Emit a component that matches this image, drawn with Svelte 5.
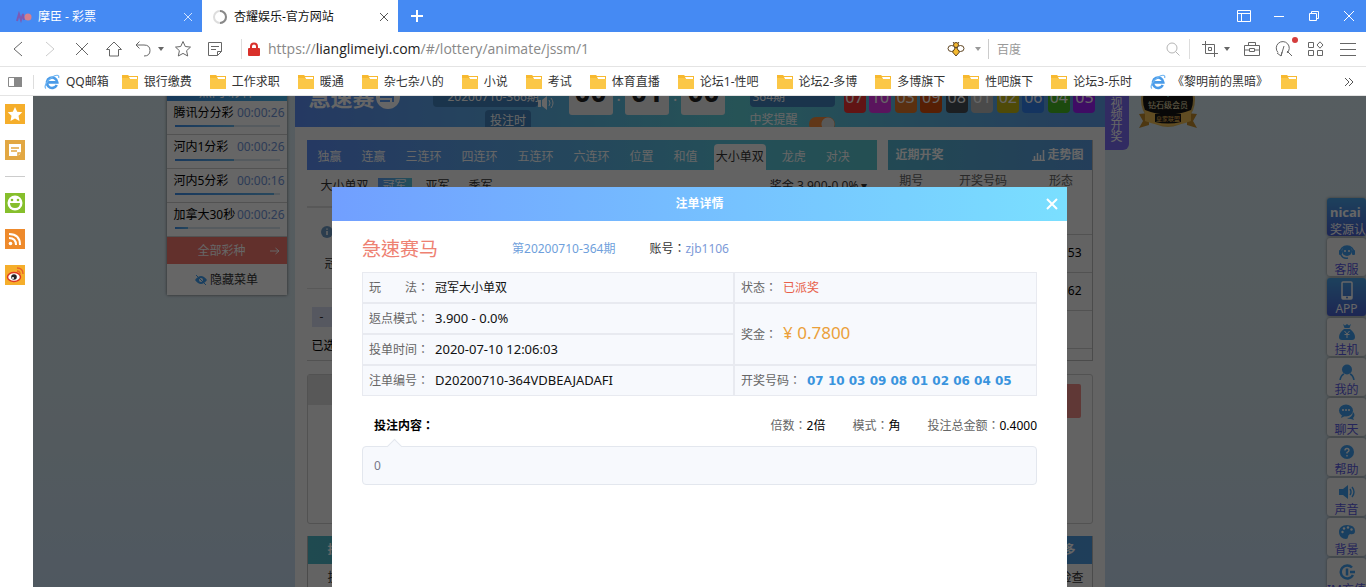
<script lang="ts">
  type Bookmark = { name: string; ie?: boolean }

  const bookmarks: Bookmark[] = [
    { name: 'QQ邮箱', ie: true },
    { name: '银行缴费' },
    { name: '工作求职' },
    { name: '暖通' },
    { name: '杂七杂八的' },
    { name: '小说' },
    { name: '考试' },
    { name: '体育直播' },
    { name: '论坛1-性吧' },
    { name: '论坛2-多博' },
    { name: '多博旗下' },
    { name: '性吧旗下' },
    { name: '论坛3-乐时' },
    { name: '《黎明前的黑暗》', ie: true },
    { name: '' },
  ]

  const lotteries = [
    { name: '腾讯分分彩', time: '00:00:26', pct: 57 },
    { name: '河内1分彩', time: '00:00:26', pct: 57 },
    { name: '河内5分彩', time: '00:00:16', pct: 95 },
    { name: '加拿大30秒', time: '00:00:26', pct: 13 },
  ]

  const balls = [
    { n: '07', color: '#f23232' },
    { n: '10', color: '#e134e8' },
    { n: '03', color: '#e37828' },
    { n: '09', color: '#d74e0c' },
    { n: '08', color: '#464e55' },
    { n: '01', color: '#b9b9b9' },
    { n: '02', color: '#c6b914' },
    { n: '06', color: '#3282f0' },
    { n: '04', color: '#46b923' },
    { n: '05', color: '#9e1efa' },
  ]

  const tabs = ['独赢', '连赢', '三连环', '四连环', '五连环', '六连环', '位置', '和值', '大小单双', '龙虎', '对决']
  let activeTab = $state('大小单双')

  // winning-shape column of the recent draws
  const shapes = ['', '53', '162', '', '04']

  const dock = ['客服', 'APP', '挂机', '我的', '聊天', '帮助', '声音', '背景', 'IM充值']

  const bet = {
    play: '冠军大小单双',
    mode: '3.900 - 0.0%',
    time: '2020-07-10 12:06:03',
    id: 'D20200710-364VDBEAJADAFI',
    status: '已派奖',
    prize: '0.7800',
    numbers: '07 10 03 09 08 01 02 06 04 05',
  }
</script>

{#snippet ieIcon()}
  <svg width="16" height="16" viewBox="0 0 16 16" fill="none">
    <path d="M12.8 11a5.2 5.2 0 1 1 .5-2.6H4" stroke="#4a9be8" stroke-width="2.6" />
    <path d="M2 14.6C-.6 12.800 3 6.500 8 3.200 12.500.2 15.600.8 14.600 4" stroke="#6db4f2" stroke-width="1.200" />
  </svg>
{/snippet}

{#snippet folderIcon()}
  <svg width="16" height="14" viewBox="0 0 16 14">
    <path d="M0 0h6l1 1h9v13H0z" fill="#f7b930" />
    <path d="M7 2h8v2H8z" fill="#fff" />
    <path d="M0 3h6l2 1h8v10H0z" fill="#fbc747" />
  </svg>
{/snippet}

{#snippet dockIcon(name: string)}
  <svg width={name === 'APP' ? 16 : 18} height={name === 'APP' ? 20 : 16} viewBox={name === 'APP' ? '0 0 16 20' : '0 0 18 16'} fill="#3f9ff0">
    {#if name === '客服'}
      <circle cx="9" cy="7" r="5" />
      <path d="M2 9a7 7 0 0 1 14 0M3 11q2 4 7 3" fill="none" stroke="#3f9ff0" stroke-width="1.500" />
      <rect x="1" y="6" width="3" height="5" rx="1" /><rect x="14" y="6" width="3" height="5" rx="1" />
      <circle cx="7" cy="7" r="1" fill="#fff" /><circle cx="11" cy="7" r="1" fill="#fff" />
    {:else if name === 'APP'}
      <rect x="3" y="1" width="10" height="17" rx="1" fill="none" stroke="#fff" stroke-width="1.500" />
      <path d="M3 15h10v3H3z" fill="#fff" /><circle cx="8" cy="16.500" r="1" fill="#4a80d8" />
    {:else if name === '挂机'}
      <path d="M5 0l2 1.500L9 0l2 1.500L13 0l-1.500 4h-5zM6 5h6q5 4 5 8 0 3-3 3H4q-3 0-3-3 0-4 5-8z" />
      <path d="M6.500 7L9 10l2.500-3M6.500 10.500h5M9 10v4" stroke="#fff" fill="none" />
    {:else if name === '我的'}
      <circle cx="9" cy="5.500" r="5" />
      <path d="M2 16q1-5 4-6M16 16q-1-5-4-6" fill="none" stroke="#3f9ff0" stroke-width="1.600" />
    {:else if name === '聊天'}
      <ellipse cx="8" cy="6.500" rx="7" ry="6" /><path d="M4 11l-1 3 4-2zM15 8q3 3 0 6l1 2-3-1q-3 0-4-1 5 0 6-6z" />
      <circle cx="5" cy="6" r="1" fill="#fff" /><circle cx="8" cy="6" r="1" fill="#fff" /><circle cx="11" cy="6" r="1" fill="#fff" />
    {:else if name === '帮助'}
      <circle cx="9" cy="8" r="7" />
      <path d="M7 6.500q0-2 2-2t2 1.800q0 1-2 2.200v1M9 11v1.500" fill="none" stroke="#fff" stroke-width="1.400" />
    {:else if name === '声音'}
      <path d="M1 5h4l5-4v14l-5-4H1z" />
      <path d="M12 5q2 3 0 6M14 3q4 5 0 10" fill="none" stroke="#3f9ff0" stroke-width="1.400" />
    {:else if name === '背景'}
      <path d="M9 1C4 1 1 4 1 8s3 7 7 7q2 0 2-2t2-3q5 1 5-3 0-6-8-6z" />
      <g fill="#fff"><circle cx="4.500" cy="8" r="1.200" /><circle cx="6" cy="4.500" r="1.200" /><circle cx="10" cy="3.500" r="1.200" /><circle cx="13.500" cy="5.500" r="1.200" /></g>
    {:else}
      <path d="M14 3.500A6.500 6.500 0 1 0 15 11" fill="none" stroke="#3f9ff0" stroke-width="2.500" />
      <path d="M9 4.500v7M12 8h5" stroke="#3f9ff0" stroke-width="2.500" />
    {/if}
  </svg>
{/snippet}

<div class="browser">
  <header class="titlebar">
    <div class="tab">
      <svg width="16" height="12" viewBox="0 0 16 12">
        <path d="M1 10l2-7 2 6 2-6 1 6" fill="none" stroke="#7c5ab4" stroke-width="2" />
        <circle cx="12" cy="6" r="3.500" fill="#d77f8c" />
      </svg>
      <span>摩臣 - 彩票</span>
      <button aria-label="关闭标签"><svg width="10" height="10" viewBox="0 0 10 10"><path d="M1 1l8 8M9 1L1 9" stroke="#cfe2ff" /></svg></button>
    </div>
    <div class="tab current">
      <svg width="16" height="16" viewBox="0 0 16 16" fill="none" stroke-width="2">
        <circle cx="8" cy="8" r="6" stroke="#ddd" /><path d="M8 2a6 6 0 0 1 0 12" stroke="#888" />
      </svg>
      <span>杏耀娱乐-官方网站</span>
      <button aria-label="关闭标签"><svg width="10" height="10" viewBox="0 0 10 10"><path d="M1 1l8 8M9 1L1 9" stroke="#555" /></svg></button>
    </div>
    <button class="new-tab" aria-label="新标签"><svg width="12" height="12" viewBox="0 0 12 12"><path d="M6 0v12M0 6h12" stroke="#fff" stroke-width="2" /></svg></button>
    <div class="window-buttons">
      <button aria-label="布局"><svg width="14" height="12" viewBox="0 0 14 12"><path d="M.5.5h13v11H.5zM.5 3.500h13M4.500 3.500v8" /></svg></button>
      <button aria-label="最小化"><svg width="12" height="12" viewBox="0 0 12 12"><path d="M1 6.500h10" /></svg></button>
      <button aria-label="还原"><svg width="12" height="12" viewBox="0 0 12 12"><path d="M1.500 3.500h7v7h-7zM3.500 3V1.500h7v7H9" /></svg></button>
      <button aria-label="关闭"><svg width="12" height="12" viewBox="0 0 12 12"><path d="M1 1l10 10M11 1L1 11" /></svg></button>
    </div>
  </header>

  <nav class="toolbar">
    <button aria-label="后退"><svg width="12" height="18" viewBox="0 0 12 18"><path d="M10 2L2 9l8 7" /></svg></button>
    <button class="off" aria-label="前进"><svg width="12" height="18" viewBox="0 0 12 18"><path d="M2 2l8 7-8 7" /></svg></button>
    <button aria-label="停止"><svg width="14" height="14" viewBox="0 0 14 14"><path d="M1 1l12 12M13 1L1 13" /></svg></button>
    <button aria-label="主页"><svg width="18" height="18" viewBox="0 0 18 18"><path d="M1.500 9.500L9 2l7.500 7.500h-3v6.500h-9V9.500z" /></svg></button>
    <button class="wide" aria-label="撤销">
      <svg width="18" height="18" viewBox="0 0 18 18"><path d="M5.500 1.500L2 5l3.500 3.500M2 5h8q6 0 6 5.500T10 16" /></svg>
      <i class="caret"></i>
    </button>
    <button aria-label="收藏"><svg width="18" height="18" viewBox="0 0 18 18"><path d="M9 1.500l2.300 5 5.200.6-3.900 3.600 1.100 5.300L9 13.400 4.300 16l1.100-5.300L1.500 7.100l5.200-.6z" /></svg></button>
    <button aria-label="笔记"><svg width="16" height="16" viewBox="0 0 16 16"><path d="M1.500 1.500h13v9l-4 4h-9zM14.500 10.500h-4v4M4 5.500h8M4 8.500h5" /></svg></button>
    <div class="address">
      <svg width="12" height="15" viewBox="0 0 12 15"><path d="M3 7V4.500a3 3 0 0 1 6 0V7" fill="none" stroke="#d9302a" stroke-width="2" /><rect y="6" width="12" height="8" rx="1" fill="#d9302a" /></svg>
      <div class="url" role="textbox" tabindex="0" aria-label="网址">https://<b>lianglimeiyi.com</b>/#/lottery/animate/jssm/1</div>
    </div>
    <div class="search">
      <svg width="18" height="16" viewBox="0 0 18 16" stroke="#5f4522">
        <path d="M6 1l2 2.500M12 1l-2 2.500" fill="none" /><circle cx="9" cy="4" r="2.500" fill="#f4b92f" />
        <ellipse cx="4.500" cy="7.500" rx="3.500" ry="3" fill="#fff" /><ellipse cx="13.500" cy="7.500" rx="3.500" ry="3" fill="#fff" />
        <path d="M9 6l3.500 5L9 15l-3.500-4z" fill="#f4b92f" />
      </svg>
      <i class="caret gray"></i>
      <label for="q" class="sr" aria-label="搜索"></label>
      <input id="q" placeholder="百度" />
      <svg width="16" height="16" viewBox="0 0 16 16" stroke="#b5b5b5" fill="none"><circle cx="7" cy="7" r="5" /><path d="M10.500 10.500L14.500 14.500" /></svg>
    </div>
    <button class="wide right" aria-label="截图">
      <svg width="16" height="16" viewBox="0 0 16 16"><path d="M3.500 0v12.500H16M0 3.500h12.500V16M6.500 6.500h3v3h-3z" /></svg>
      <i class="caret"></i>
    </button>
    <button aria-label="工具箱"><svg width="18" height="16" viewBox="0 0 18 16"><path d="M1.500 4.500h15v10h-15zM5.500 4V1.500h7V4M1.500 9h5M11.500 9h5M6.500 7.500h5v3h-5z" /></svg></button>
    <button class="notice" aria-label="搜索助手"><svg width="18" height="18" viewBox="0 0 18 18"><path d="M3 12.500A6.500 6.500 0 1 1 12 13M12 11l5 5M6 16l3-10M2 13l4 3 1-4" /></svg></button>
    <button aria-label="应用"><svg width="16" height="16" viewBox="0 0 16 16"><path d="M.5 1.500h5v5h-5zM.5 9.500h5v5h-5zM9.500 9.500h5v5h-5zM12 .8l3 3.200-3 3.200L9 4z" /></svg></button>
    <button aria-label="菜单"><svg width="18" height="16" viewBox="0 0 18 16"><path d="M1 2.500h16M1 8.500h16M1 14.500h16" /></svg></button>
  </nav>

  <nav class="bookmarks">
    <button class="panel-toggle" aria-label="侧栏"><svg width="14" height="10" viewBox="0 0 14 10"><path d="M.5.500h13v9H.5z" fill="none" stroke="#888" /><path d="M6 0h8v10H6z" fill="#888" /></svg></button>
    {#each bookmarks as b}
      <a href="#/" class:ie={b.ie} aria-label={b.name || '收藏夹'}>
        {#if b.ie}{@render ieIcon()}{:else}{@render folderIcon()}{/if}
        {b.name}
      </a>
    {/each}
    <button class="more" aria-label="更多"><svg width="10" height="10" viewBox="0 0 10 10"><path d="M1 1l4 4-4 4M5 1l4 4-4 4" fill="none" stroke="#555" /></svg></button>
  </nav>

  <div class="main">
    <aside class="strip">
      <button aria-label="收藏" class="amber"><svg width="20" height="20" viewBox="0 0 20 20"><path d="M10 3l2.200 4.700 5.100.6-3.800 3.500 1 5.100L10 14.400l-4.500 2.500 1-5.100-3.800-3.500 5.100-.6z" fill="#fff" /></svg></button>
      <button aria-label="便签" class="gold"><svg width="20" height="20" viewBox="0 0 20 20"><path d="M4 4h12v9l-3 3H4z" fill="#fff" /><path d="M6 8h8M6 11h6M16 13h-3v3" fill="none" stroke="#e2a742" stroke-width="1.500" /></svg></button>
      <hr />
      <button aria-label="表情" class="green"><svg width="20" height="20" viewBox="0 0 20 20"><circle cx="10" cy="10" r="7.500" fill="#fff" /><path d="M5 10h10q0 5-5 5t-5-5z" fill="#86bf2c" /><circle cx="7" cy="7" r="1.300" fill="#86bf2c" /><circle cx="13" cy="7" r="1.300" fill="#86bf2c" /></svg></button>
      <button aria-label="订阅" class="orange"><svg width="20" height="20" viewBox="0 0 20 20"><g fill="none" stroke="#fff" stroke-width="2"><path d="M4 9q7 0 7 7M4 5q11 0 11 11" /></g><circle cx="5.500" cy="14.500" r="1.800" fill="#fff" /></svg></button>
      <button aria-label="微博" class="amber"><svg width="20" height="20" viewBox="0 0 20 20"><ellipse cx="9" cy="12" rx="6.500" ry="4.500" fill="#fff" stroke="#dd3b22" stroke-width="1.500" /><circle cx="9" cy="12" r="2.800" fill="#222" /><circle cx="8" cy="13" r="1" fill="#fff" /><path d="M12 6q3 0 3 3M12 3q6 0 6 6" fill="none" stroke="#e8622a" stroke-width="1.400" /></svg></button>
    </aside>

    <div class="view">
      <div class="page">
        <aside class="menu">
          <div class="menu-head">热门 彩种</div>
          {#each lotteries as l}
            <a href="#/" class="lottery">
              <span>{l.name}</span><time>{l.time}</time>
              <div class="bar"><div class="fill" style:width="{l.pct}%"></div></div>
            </a>
          {/each}
          <button class="all">全部彩种<svg width="10" height="8" viewBox="0 0 10 8"><path d="M0 4h9M5.500 1L9 4 5.500 7" fill="none" stroke="#fff" /></svg></button>
          <button class="hide"><svg width="12" height="10" viewBox="0 0 12 10"><path d="M0 5q6-8 12 0-6 8-12 0z" fill="#3f9ff0" /><circle cx="6" cy="5" r="2" fill="#fff" /><path d="M1 0l10 10" stroke="#3f9ff0" /></svg>隐藏菜单</button>
        </aside>

        <main class="panel">
          <section class="game-head">
            <h1>急速赛<svg width="26" height="26" viewBox="0 0 26 26"><circle cx="13" cy="13" r="12" fill="#fff" /><path d="M6 8h12v10M6 8v5h12M5 17h10" fill="none" stroke="#5d9df5" stroke-width="2" /></svg></h1>
            <div class="issue">
              <div class="box">20200710-366期</div>
              <svg width="18" height="14" viewBox="0 0 18 14"><path d="M0 4h3v7H0zM4 4l5-4v14l-5-4z" fill="#fff" /><path d="M11 4q2 3 0 6M13 2q4 5 0 10" fill="none" stroke="#fff" /></svg>
              <span class="bet-time">投注时</span>
            </div>
            <div class="clock"><span>00</span>:<span>01</span>:<span>00</span></div>
            <div class="drawn">
              <div class="box">364期</div>
              <label>中奖提醒<input type="checkbox" checked /></label>
            </div>
            <div class="balls">
              {#each balls as b}<span style:background={b.color}>{b.n}</span>{/each}
            </div>
          </section>

          <div class="columns">
            <section class="bets">
              <nav class="tabs">
                {#each tabs as t}
                  <button class:active={t === activeTab} onclick={() => (activeTab = t)}>{t}</button>
                {/each}
              </nav>
              <div class="kinds">
                <span>大小单双</span>
                <button class="on">冠军</button><button>亚军</button><button>季军</button>
                <span class="rate">奖金 3.900-0.0% ▾</span>
              </div>
              <div class="tip"><svg width="12" height="12" viewBox="0 0 12 12"><circle cx="6" cy="6" r="6" fill="#6d9ac4" /><path d="M6 5v4M6 2.500v1.300" stroke="#fff" stroke-width="1.500" /></svg></div>
              <div class="pick">冠军</div>
              <div class="stake"><button>-</button></div>
              <div class="chosen">已选</div>
            </section>
            <section class="recent">
              <header>近期开奖<a href="#/"><svg width="13" height="11" viewBox="0 0 13 11"><path d="M0 10.500h13M2.500 10V6M5.500 10V3M8.500 10V5M11.500 10V0" stroke="#fff" stroke-width="1.500" /></svg>走势图</a></header>
              <table>
                <thead><tr><th>期号</th><th>开奖号码</th><th>形态</th></tr></thead>
                <tbody>
                  {#each shapes as s}<tr><td></td><td></td><td>{s}</td></tr>{/each}
                </tbody>
              </table>
            </section>
          </div>

          <section class="cart">
            <div class="cart-head"></div>
            <button aria-label="确认投注"></button>
          </section>
          <section class="records">
            <header><span>投注</span><span>更多</span></header>
            <div class="record-row"><span>投注</span><span>检查</span></div>
          </section>
        </main>

        <div class="right-side">
          <button class="video">视频开奖</button>
          <svg class="medal" width="62" height="62" viewBox="0 0 62 62">
            <circle cx="31" cy="28" r="26" fill="#151515" stroke="#d8b25a" stroke-width="2" />
            <path d="M24 10h14l4 5-11 10-11-10z" fill="#5ad6c8" />
            <text x="31" y="36" fill="#f5e6b8" font-size="8" text-anchor="middle">钻石级会员</text>
            <path d="M2 42l10-1v12l-10 3 4-7zM60 42l-10-1v12l10 3-4-7z" fill="#c08a2c" />
            <path d="M8 38q23 9 46 0v11q-23 9-46 0z" fill="#efbe55" />
            <path d="M18 42h26v8q-13 3-26 0z" fill="#151515" />
            <text x="31" y="49" fill="#efbe55" font-size="6" text-anchor="middle">皇家联盟</text>
          </svg>
        </div>
      </div>

      <nav class="dock">
        <a href="#/" class="blue nicai"><strong>nicai</strong>奖源认证</a>
        {#each dock as d}
          <a href="#/" class:blue={d === 'APP'}>{@render dockIcon(d)}{d}</a>
        {/each}
      </nav>

      <div class="overlay">
        <div class="modal" role="dialog" aria-label="注单详情">
          <header>
            注单详情
            <button aria-label="关闭"><svg width="12" height="12" viewBox="0 0 12 12"><path d="M1 1l10 10M11 1L1 11" stroke="#fff" stroke-width="2" /></svg></button>
          </header>
          <div class="modal-body">
            <div class="summary">
              <h2>急速赛马</h2>
              <span class="period">第20200710-364期</span>
              <span class="account">账号：<em>zjb1106</em></span>
            </div>
            <table class="detail">
              <tbody>
                <tr>
                  <td class="left"><span class="key">玩　　法：</span>{bet.play}</td>
                  <td><span class="key">状态：</span><span class="status">{bet.status}</span></td>
                </tr>
                <tr>
                  <td><span class="key">返点模式：</span><span class="value">{bet.mode}</span></td>
                  <td rowspan="2"><span class="key">奖金：</span><span class="prize">¥ {bet.prize}</span></td>
                </tr>
                <tr><td><span class="key">投单时间：</span><span class="value">{bet.time}</span></td></tr>
                <tr>
                  <td><span class="key">注单编号：</span><span class="value">{bet.id}</span></td>
                  <td><span class="key">开奖号码：</span><span class="numbers">{bet.numbers}</span></td>
                </tr>
              </tbody>
            </table>
            <div class="totals">
              <strong>投注内容：</strong>
              <span>倍数：<b>2倍</b></span>
              <span>模式：<b>角</b></span>
              <span>投注总金额：<b>0.4000</b></span>
            </div>
            <div class="content">0</div>
          </div>
        </div>
      </div>
    </div>
  </div>
</div>

<style>
  :global(body) {
    margin: 0;
    overflow: hidden;
  }

  .browser {
    display: flex;
    flex-direction: column;
    height: 100vh;
    background: #fff;
    color: #333;
    font: 12px/16px 'Noto Sans', 'Noto Sans CJK SC', sans-serif;
  }

  .browser * {
    box-sizing: border-box;
  }

  button {
    display: flex;
    align-items: center;
    justify-content: center;
    padding: 0;
    border: 0;
    background: none;
    color: inherit;
    font: inherit;
  }

  a {
    color: inherit;
    text-decoration: none;
  }

  svg {
    flex: none;
  }

  .sr {
    position: absolute;
    width: 1px;
    height: 1px;
    overflow: hidden;
    clip-path: inset(50%);
  }

  .titlebar {
    display: flex;
    flex: none;
    height: 32px;
    background: #458af3;
    color: #fff;
  }

  .tab {
    display: flex;
    align-items: center;
    gap: 6px;
    width: 202px;
    padding: 1px 8px 0 16px;
  }

  .tab.current {
    width: 196px;
    padding-left: 10px;
    background: #fff;
    color: #111;
  }

  .tab button {
    margin-left: auto;
    width: 12px;
    height: 16px;
  }

  .new-tab {
    width: 38px;
  }

  .window-buttons {
    display: flex;
    margin-left: auto;
  }

  .window-buttons button {
    width: 35px;
  }

  .window-buttons svg {
    fill: none;
    stroke: #fff;
  }

  .toolbar {
    display: flex;
    flex: none;
    align-items: center;
    height: 35px;
    padding: 0 2px;
    border-bottom: 1px solid #e4e4e4;
  }

  .toolbar button {
    width: 32px;
    height: 32px;
  }

  .toolbar button svg {
    fill: none;
    stroke: #666;
  }

  .toolbar button.off svg {
    stroke: #ccc;
  }

  .toolbar button.wide {
    width: 37px;
    gap: 6px;
  }

  .toolbar button.right {
    width: 41px;
  }

  .caret {
    border: 3px solid transparent;
    border-top: 4px solid #666;
    border-bottom: 0;
  }

  .caret.gray {
    border-top-color: #999;
  }

  .notice {
    position: relative;
  }

  .notice::after {
    content: '';
    position: absolute;
    top: 4px;
    right: 2px;
    width: 6px;
    height: 6px;
    border-radius: 50%;
    background: #d43c3c;
  }

  .address {
    display: flex;
    flex: 1;
    align-items: center;
    gap: 8px;
    height: 20px;
    margin-left: 10px;
    padding-left: 6px;
    border-left: 1px solid #ddd;
  }

  .url {
    color: #888;
    font-family: 'Open Sans', sans-serif;
    font-size: 14px;
  }

  .url b {
    color: #222;
    font-weight: 400;
  }

  .search {
    display: flex;
    align-items: center;
    width: 243px;
    height: 20px;
    margin-right: 5px;
    padding-right: 8px;
    border-right: 1px solid #ddd;
  }

  .search .caret {
    margin: 0 7px 0 10px;
  }

  .search input {
    flex: 1;
    min-width: 0;
    height: 20px;
    padding: 0 8px;
    border: 0;
    border-left: 1px solid #ccc;
    outline: 0;
    font: inherit;
  }

  .search input::placeholder {
    color: #999;
  }

  .bookmarks {
    display: flex;
    flex: none;
    align-items: center;
    gap: 18px;
    height: 29px;
    padding: 1px 12px 0 8px;
    border-bottom: 1px solid #e4e4e4;
    white-space: nowrap;
  }

  .bookmarks a {
    display: flex;
    align-items: center;
    gap: 6px;
  }

  .bookmarks a.ie {
    margin-right: -5px;
  }

  .panel-toggle {
    height: 14px;
    margin-right: -8px;
    padding-right: 11px;
    border-right: 1px solid #ddd;
  }

  .more {
    margin-left: auto;
  }

  .main {
    display: flex;
    flex: 1;
    min-height: 0;
  }

  .strip {
    display: flex;
    flex-direction: column;
    align-items: center;
    gap: 16px;
    width: 33px;
    padding: 8px 3px 0 0;
  }

  .strip hr {
    width: 20px;
    height: 1px;
    margin: 0;
    border: 0;
    background: #ccc;
  }

  .amber { background: #f5ae2b; }
  .gold { background: #e2a742; }
  .green { background: #86bf2c; }
  .orange { background: #ee8a2c; }

  .view {
    position: relative;
    flex: 1;
    overflow: hidden;
    background: linear-gradient(#d7e8f0, #d3e3ea 60%, #c6dcf0);
  }

  /* scrolled down a little way */
  .page {
    display: grid;
    grid-template-columns: 1fr 810px 1fr;
    margin-top: -40px;
  }

  .menu {
    justify-self: end;
    align-self: start;
    width: 120px;
    margin: 26px 8px 0 0;
    background: #fff;
    box-shadow: 0 0 3px #666;
  }

  .menu-head {
    height: 19px;
    background: linear-gradient(90deg, #3c8fe0, #46b5ee);
    color: #fff;
    font-size: 13px;
    line-height: 19px;
    text-align: center;
  }

  .lottery {
    display: grid;
    grid-template-columns: 1fr auto;
    align-content: start;
    height: 34px;
    padding: 3px 2px 0 7px;
    border-bottom: 1px solid #ccc;
    color: #000;
    line-height: 18px;
    white-space: nowrap;
  }

  .lottery time {
    color: #7195d8;
  }

  .bar {
    grid-column: span 2;
    height: 2px;
    margin: 3px 5px 0 1px;
    background: #d8e4ee;
  }

  .fill {
    height: 2px;
    background: linear-gradient(90deg, #3f8fe8, #62b2e8);
  }

  .all {
    gap: 24px;
    width: 100%;
    height: 27px;
    padding-left: 24px;
    background: #f5786f;
    color: #fff;
  }

  .hide {
    gap: 3px;
    width: 100%;
    height: 31px;
  }

  .panel {
    background: #f8f8f8;
  }

  .game-head {
    display: flex;
    height: 71px;
    overflow: hidden;
    background: linear-gradient(90deg, #5c8ff5, #5fd0d8 55%, #5c9fe8 95%);
    color: #fff;
    white-space: nowrap;
  }

  .game-head h1 {
    display: flex;
    align-items: center;
    width: 138px;
    height: 26px;
    margin: 28px 0 0;
    padding-left: 14px;
    font-size: 22px;
  }

  .issue {
    display: grid;
    grid-template-columns: 105px 20px;
    align-content: start;
    width: 136px;
    padding-top: 30px;
  }

  .box {
    height: 21px;
    border-radius: 4px;
    background: #4382bd;
    line-height: 21px;
  }

  .issue .box {
    padding-left: 15px;
  }

  .issue svg {
    margin-top: 10px;
  }

  .bet-time {
    justify-self: center;
    width: 46px;
    margin-left: 46px;
    border-radius: 4px;
    background: #4382bd;
    line-height: 22px;
    text-align: center;
  }

  .clock {
    display: flex;
    justify-content: space-between;
    width: 157px;
    height: 40px;
    margin: 19px 24px 0 0;
    font-size: 16px;
    line-height: 40px;
  }

  .clock span {
    width: 44px;
    border-radius: 3px;
    background: #eee;
    color: #222;
    font-size: 28px;
    font-weight: 700;
    line-height: 32px;
    text-align: center;
  }

  .drawn {
    width: 85px;
    margin: 30px 9px 0 0;
  }

  .drawn .box {
    padding-left: 3px;
  }

  .drawn label {
    display: flex;
    align-items: center;
    justify-content: space-between;
    height: 26px;
  }

  .drawn input {
    appearance: none;
    width: 26px;
    height: 14px;
    margin: 8px 0 0;
    border-radius: 7px;
    background: radial-gradient(circle at 19px 7px, #ddd 6px, #f28a3c 7px);
  }

  .balls {
    display: grid;
    grid-template-columns: repeat(10, 22px);
    justify-content: space-between;
    width: 252px;
    height: 27px;
    margin-top: 30px;
  }

  .balls span {
    border-radius: 4px;
    font-size: 16px;
    line-height: 22px;
    text-align: center;
  }

  .columns {
    display: flex;
    gap: 11px;
    height: 221px;
    margin: 13px 12px;
  }

  .bets {
    flex: 1;
    border-bottom: 1px solid #ccc;
  }

  .tabs {
    display: flex;
    align-items: flex-end;
    gap: 12px;
    height: 30px;
    padding-left: 7px;
    background: linear-gradient(90deg, #5c8ff5, #5bc5dc 75%, #5bc5ce);
    color: #fff;
  }

  .tabs button {
    height: 26px;
    padding: 0 4px;
    border-radius: 4px 4px 0 0;
  }

  .tabs .active {
    padding: 0 2px;
    background: #f8f8f8;
    color: #333;
  }

  .kinds {
    display: flex;
    height: 38px;
    padding: 8px 9px 0 14px;
    border-bottom: 2px solid #ddd;
  }

  .kinds button {
    height: 16px;
    margin-left: 9px;
    padding: 0 5px;
  }

  .kinds .on {
    background: linear-gradient(90deg, #5c9ff5, #5bc5dc);
    color: #fff;
  }

  .rate {
    margin-left: auto;
  }

  .tip {
    height: 38px;
    padding: 18px 14px;
  }

  .pick {
    height: 43px;
    padding: 10px 18px;
    border-bottom: 1px solid #ddd;
  }

  .stake {
    padding: 18px 5px 11px;
  }

  .stake button {
    width: 20px;
    height: 20px;
    background: #d8dcf0;
  }

  .chosen {
    padding-left: 5px;
    color: #000;
  }

  .recent {
    width: 205px;
    overflow: hidden;
    border: solid #bbb;
    border-width: 0 1px 1px 0;
  }

  .recent header {
    display: flex;
    align-items: center;
    justify-content: space-between;
    height: 30px;
    padding: 0 8px;
    background: linear-gradient(90deg, #55b5d0, #5a9be0);
    color: #fff;
    font-weight: 700;
  }

  .recent header a {
    display: flex;
    align-items: center;
    gap: 2px;
  }

  .recent table {
    width: 100%;
    border-collapse: collapse;
  }

  .recent th {
    height: 26px;
    padding: 0 0 4px;
    color: #666;
    font-weight: 400;
  }

  .recent td {
    height: 38px;
    padding: 0 10px 0 0;
    border-bottom: 1px solid #ccc;
    color: #000;
    text-align: right;
  }

  .cart {
    height: 150px;
    margin: 0 12px 12px;
    border: 1px solid #ccc;
    border-radius: 3px;
  }

  .cart-head {
    width: 60%;
    height: 30px;
    background: #ddd;
  }

  .cart button {
    width: 90px;
    height: 34px;
    margin: -21px 11px 0 auto;
    border-radius: 2px;
    background: #f08c88;
  }

  .records {
    margin: 0 12px;
    border: solid #bbb;
    border-width: 0 1px;
  }

  .records header {
    display: flex;
    align-items: center;
    justify-content: space-between;
    height: 28px;
    padding: 0 16px 0 20px;
    background: linear-gradient(90deg, #4fb8c8, #4f9be0);
    color: #fff;
    font-weight: 700;
  }

  .record-row {
    display: flex;
    justify-content: space-between;
    padding: 6px 8px 20px 20px;
  }

  .right-side {
    display: flex;
    align-items: flex-start;
    gap: 8px;
  }

  .video {
    align-items: flex-end;
    width: 24px;
    height: 94px;
    padding: 0 6px 8px;
    border-radius: 0 0 6px 0;
    background: #7b6cf5;
    color: #fff;
    line-height: 11px;
  }

  .medal {
    margin-top: 16px;
  }

  .dock {
    position: absolute;
    top: 102px;
    right: 0;
    display: grid;
    gap: 2px;
    width: 39px;
  }

  .dock a {
    display: flex;
    flex-direction: column;
    gap: 2px;
    align-items: center;
    height: 38px;
    padding-top: 6px;
    border-radius: 3px;
    background: #f5f5f5;
    box-shadow: 0 0 3px #888;
    color: #5a5ae0;
    white-space: nowrap;
    overflow: hidden;
  }

  .dock a.blue {
    gap: 0;
    padding-top: 3px;
    background: linear-gradient(#4aa3e8, #4a60d0);
    color: #fff;
  }

  .dock a.nicai {
    align-items: flex-start;
    gap: 2px;
    padding: 6px 0 0 3px;
  }

  .nicai strong {
    font-size: 13px;
    line-height: 16px;
  }

  .overlay {
    position: absolute;
    inset: 0;
    display: flex;
    justify-content: center;
    padding-top: 91px;
    background: rgba(0, 0, 0, 0.6);
  }

  /* the TC face centres the full-width colon */
  .modal {
    width: 735px;
    background: #fff;
    font-family: 'Noto Sans', 'Noto Sans CJK TC', sans-serif;
  }

  .modal header {
    display: grid;
    grid-template-columns: 1fr auto 1fr;
    align-items: center;
    height: 34px;
    padding: 0 9px;
    background: linear-gradient(90deg, #719fff, #7adfff);
    color: #fff;
    font-weight: 700;
  }

  .modal header::before {
    content: '';
  }

  .modal header button {
    justify-self: end;
  }

  .modal-body {
    padding: 0 30px;
  }

  .summary {
    display: flex;
    align-items: center;
    height: 51px;
    padding-top: 4px;
  }

  .summary h2 {
    margin: 0 74px 0 0;
    color: #ee8172;
    font-size: 19px;
    font-weight: 400;
    line-height: 24px;
  }

  .period {
    margin-right: 34px;
    color: #6f9fdc;
  }

  em {
    color: #7c9ad8;
    font-style: normal;
  }

  .detail {
    width: 100%;
    border-spacing: 0;
    border: 0;
    background: #f7f9fd;
    color: #111;
  }

  .detail td {
    height: 31px;
    padding: 0 6px;
    border: 1px solid #e8eaf0;
  }

  .detail .left {
    width: 372px;
  }

  .key {
    margin-right: 6px;
    color: #666;
  }

  .value {
    font-size: 13px;
  }

  .status {
    color: #e8604a;
  }

  .prize {
    color: #eba03a;
    font-size: 17px;
  }

  .numbers {
    color: #3a94de;
    font-family: 'DejaVu Sans', sans-serif;
    font-weight: 700;
  }

  .totals {
    display: flex;
    align-items: center;
    gap: 27px;
    height: 50px;
    padding: 10px 0 0 12px;
    color: #666;
  }

  .totals strong {
    margin-right: auto;
    color: #000;
  }

  .totals b {
    color: #000;
    font-weight: 400;
  }

  .content {
    position: relative;
    height: 39px;
    padding: 0 11px;
    border: 1px solid #e3e7ee;
    border-radius: 4px;
    background: #f7f9fd;
    color: #778;
    line-height: 37px;
  }

  .content::before {
    content: '';
    position: absolute;
    top: -6px;
    left: 26px;
    width: 10px;
    height: 10px;
    border: solid #e3e7ee;
    border-width: 1px 0 0 1px;
    background: #f7f9fd;
    transform: rotate(45deg);
  }
</style>
